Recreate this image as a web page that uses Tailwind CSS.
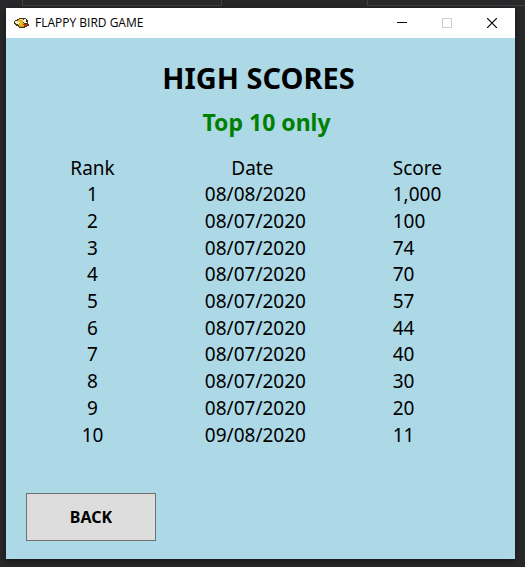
<!DOCTYPE html>
<html lang="en">
<head>
<meta charset="utf-8">
<title>Flappy Bird Game</title>
<script src="https://cdn.jsdelivr.net/npm/@tailwindcss/browser@4"></script>
</head>
<body class="relative min-h-screen flex flex-col bg-[#29292b] pt-2 pl-[6px] pr-[10px] pb-2 text-black font-['Noto_Sans',sans-serif]">
<div class="absolute inset-x-0 top-0 h-[6px] flex justify-between" aria-hidden="true">
  <div class="ml-[22px] w-[200px] border border-t-0 border-[#414143]"></div>
  <div class="w-[158px] border border-t-0 border-r-0 border-[#414143]"></div>
</div>
<main class="relative flex-1 flex flex-col bg-[#add8e6] shadow-[0_2px_8px_rgba(0,0,0,0.5)]">
  <header class="h-[30px] flex items-center bg-white pl-2">
    <svg class="w-4 h-4" viewBox="0 0 16 16" shape-rendering="crispEdges" aria-hidden="true">
      <path d="M5 3h7v1h1v1h1v4h1v2h-2v1h-2v1H5v-1H4v-1H2v-1H1V9H0V6h1V5h2V4h2z" fill="#4a3a1c"/>
      <path d="M5 4h4v4h1v3H5v-1H4V5h1z" fill="#e5b81c"/>
      <path d="M6 4h3v1H6z" fill="#f8e27a"/>
      <path d="M1 6h4v1h1v1H5v1H2V8H1z" fill="#f4eeca"/>
      <path d="M10 4h2v1h1v3h-3V7H9V5h1z" fill="#f4f4f0"/>
      <path d="M12 5h1v2h-1z" fill="#222"/>
      <path d="M9 9h5v1H9zM10 10h3v1h-3z" fill="#a83a18"/>
      <path d="M5 11h5v1H5z" fill="#c98c18"/>
    </svg>
    <h1 class="ml-[5px] text-[12px] leading-4 font-['Open_Sans',sans-serif]">FLAPPY BIRD GAME</h1>
    <div class="ml-auto flex h-full">
      <button aria-label="Minimize" class="w-[45px] flex items-center justify-center"><svg class="w-[10px] h-[10px]" viewBox="0 0 10 10"><path d="M0 4h10v1H0z"/></svg></button>
      <button aria-label="Maximize" disabled class="w-[45px] flex items-center justify-center"><svg class="w-[10px] h-[10px]" viewBox="0 0 10 10"><path d="M.5.5h9v9h-9z" fill="none" stroke="#ccc"/></svg></button>
      <button aria-label="Close" class="w-[46px] flex items-center justify-center"><svg class="w-[10px] h-[10px]" viewBox="0 0 10 10"><path d="M0 0l10 10M10 0L0 10" stroke="#000" stroke-width="1.2"/></svg></button>
    </div>
  </header>
  <h2 class="mt-5 pr-1 text-center text-[29px] leading-10 font-bold">HIGH SCORES</h2>
  <p class="mt-2 pl-3 text-center text-[23px] leading-8 font-bold text-[#008000]">Top 10 only</p>
  <table class="mt-[17px] w-full h-[293px] table-fixed text-[19px] leading-[26px] text-center">
    <thead>
      <tr><th class="w-[34%] p-0 font-normal">Rank</th><th class="w-[30%] p-0 pr-1.5 font-normal">Date</th><th class="p-0 pl-[61px] text-left font-normal">Score</th></tr>
    </thead>
    <tbody>
      <tr><td>1</td><td>08/08/2020</td><td class="pl-[61px] text-left">1,000</td></tr>
      <tr><td>2</td><td>08/07/2020</td><td class="pl-[61px] text-left">100</td></tr>
      <tr><td>3</td><td>08/07/2020</td><td class="pl-[61px] text-left">74</td></tr>
      <tr><td>4</td><td>08/07/2020</td><td class="pl-[61px] text-left">70</td></tr>
      <tr><td>5</td><td>08/07/2020</td><td class="pl-[61px] text-left">57</td></tr>
      <tr><td>6</td><td>08/07/2020</td><td class="pl-[61px] text-left">44</td></tr>
      <tr><td>7</td><td>08/07/2020</td><td class="pl-[61px] text-left">40</td></tr>
      <tr><td>8</td><td>08/07/2020</td><td class="pl-[61px] text-left">30</td></tr>
      <tr><td>9</td><td>08/07/2020</td><td class="pl-[61px] text-left">20</td></tr>
      <tr><td>10</td><td>09/08/2020</td><td class="pl-[61px] text-left">11</td></tr>
    </tbody>
  </table>
  <button class="mt-auto ml-5 mb-[18px] w-[130px] h-12 border border-[#707070] bg-[#ddd] text-[16px] leading-5 font-bold">BACK</button>
</main>
</body>
</html>
